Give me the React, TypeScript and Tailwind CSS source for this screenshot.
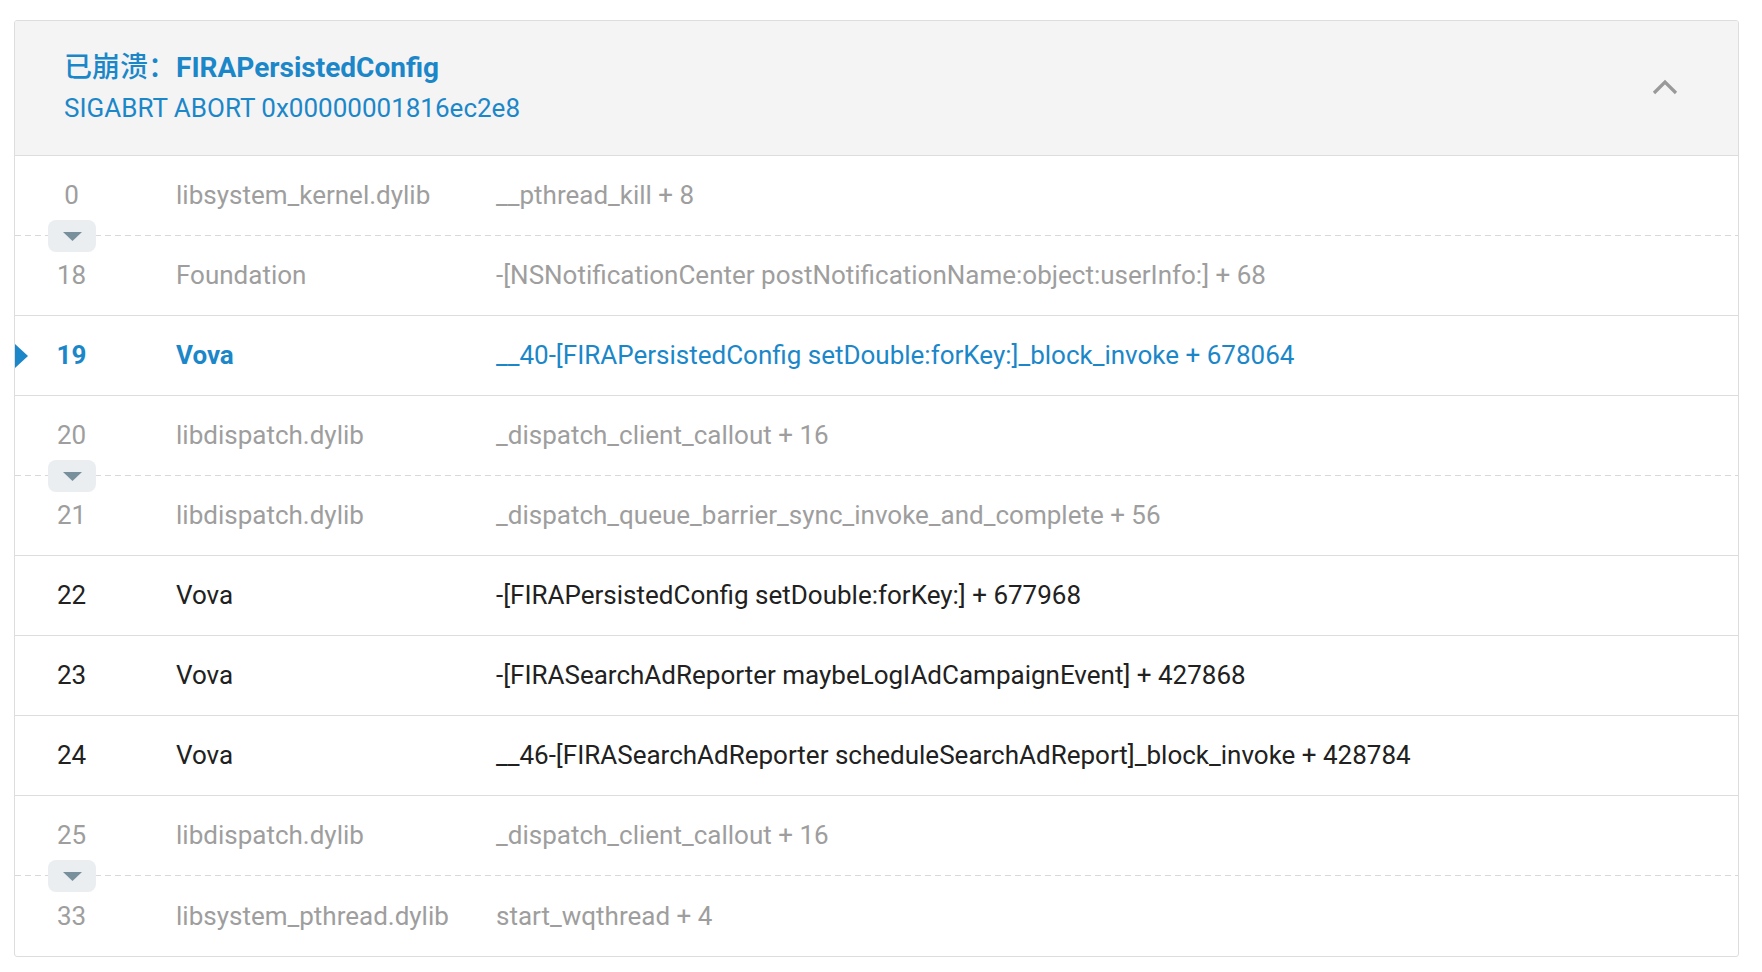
import { Fragment } from 'react';

type Frame = {
  idx: number;
  lib: string;
  sym: string;
  tone: 'muted' | 'normal' | 'crash';
  // separator under this row: solid line, collapsed (dashed + expand button) or none
  sep: 'solid' | 'collapsed' | 'none';
};

const frames: Frame[] = [
  { idx: 0, lib: 'libsystem_kernel.dylib', sym: '__pthread_kill + 8', tone: 'muted', sep: 'collapsed' },
  {
    idx: 18,
    lib: 'Foundation',
    sym: '-[NSNotificationCenter postNotificationName:object:userInfo:] + 68',
    tone: 'muted',
    sep: 'solid',
  },
  {
    idx: 19,
    lib: 'Vova',
    sym: '__40-[FIRAPersistedConfig setDouble:forKey:]_block_invoke + 678064',
    tone: 'crash',
    sep: 'solid',
  },
  { idx: 20, lib: 'libdispatch.dylib', sym: '_dispatch_client_callout + 16', tone: 'muted', sep: 'collapsed' },
  {
    idx: 21,
    lib: 'libdispatch.dylib',
    sym: '_dispatch_queue_barrier_sync_invoke_and_complete + 56',
    tone: 'muted',
    sep: 'solid',
  },
  { idx: 22, lib: 'Vova', sym: '-[FIRAPersistedConfig setDouble:forKey:] + 677968', tone: 'normal', sep: 'solid' },
  {
    idx: 23,
    lib: 'Vova',
    sym: '-[FIRASearchAdReporter maybeLogIAdCampaignEvent] + 427868',
    tone: 'normal',
    sep: 'solid',
  },
  {
    idx: 24,
    lib: 'Vova',
    sym: '__46-[FIRASearchAdReporter scheduleSearchAdReport]_block_invoke + 428784',
    tone: 'normal',
    sep: 'solid',
  },
  { idx: 25, lib: 'libdispatch.dylib', sym: '_dispatch_client_callout + 16', tone: 'muted', sep: 'collapsed' },
  { idx: 33, lib: 'libsystem_pthread.dylib', sym: 'start_wqthread + 4', tone: 'muted', sep: 'none' },
];

const toneClass = {
  muted: 'text-[#9e9e9e]',
  normal: 'text-[#212121]',
  crash: 'text-[#1b87c9] font-bold',
};

function ExpandButton() {
  return (
    <button className="absolute bottom-0 left-[33px] z-10 flex h-[32px] w-[48px] translate-y-1/2 items-center justify-center rounded-[8px] bg-[#eaeef1]">
      <svg width="19" height="9" viewBox="0 0 19 9">
        <path d="M0 0 H19 L9.5 9 Z" fill="#78909c" />
      </svg>
    </button>
  );
}

function FrameRow({ f }: { f: Frame }) {
  return (
    <div className={`relative flex h-[80px] flex-col ${toneClass[f.tone]}`}>
      <div className="flex flex-1 items-center text-[26px]">
        {f.tone === 'crash' && (
          <svg className="absolute left-0 top-[28px]" width="13" height="24" viewBox="0 0 13 24">
            <path d="M0 0 L13 12 L0 24 Z" fill="#1b87c9" />
          </svg>
        )}
        <span className="w-[113px] text-center">{f.idx}</span>
        <span className="ml-[48px] w-[320px]">{f.lib}</span>
        <span className="font-normal">{f.sym}</span>
      </div>
      {f.sep === 'solid' && <div className="h-px bg-[#dddddd]" />}
      {f.sep === 'collapsed' && (
        <div className="h-px bg-[repeating-linear-gradient(90deg,#d8d8d8_0_6px,transparent_6px_10px)]" />
      )}
      {f.sep === 'collapsed' && <ExpandButton />}
    </div>
  );
}

export default function App() {
  return (
    <div className="min-h-screen bg-white pl-[14px] pr-[23px] pt-[20px] font-['Roboto','Noto_Sans_CJK_SC',sans-serif]">
      <div className="overflow-hidden rounded-[3px] border border-[#dddddd]">
        <div className="flex h-[135px] items-center justify-between border-b border-[#dddddd] bg-[#f4f4f4] pl-[49px] pr-[60px]">
          <div className="mb-[7px] text-[#1b87c9]">
            <div className="text-[28px] font-bold leading-[36px]">
              <span className="font-['Noto_Sans_CJK_SC',sans-serif] font-medium">已崩溃：</span>FIRAPersistedConfig
            </div>
            <div className="mt-[7px] text-[26px] leading-[30px]">SIGABRT ABORT 0x00000001816ec2e8</div>
          </div>
          <svg width="26" height="16" viewBox="0 0 26 16" className="mb-[2px]">
            <path d="M2 14 L13 3 L24 14" fill="none" stroke="#999999" strokeWidth="3.2" />
          </svg>
        </div>
        {frames.map((f) => (
          <Fragment key={f.idx}>
            <FrameRow f={f} />
          </Fragment>
        ))}
      </div>
    </div>
  );
}
